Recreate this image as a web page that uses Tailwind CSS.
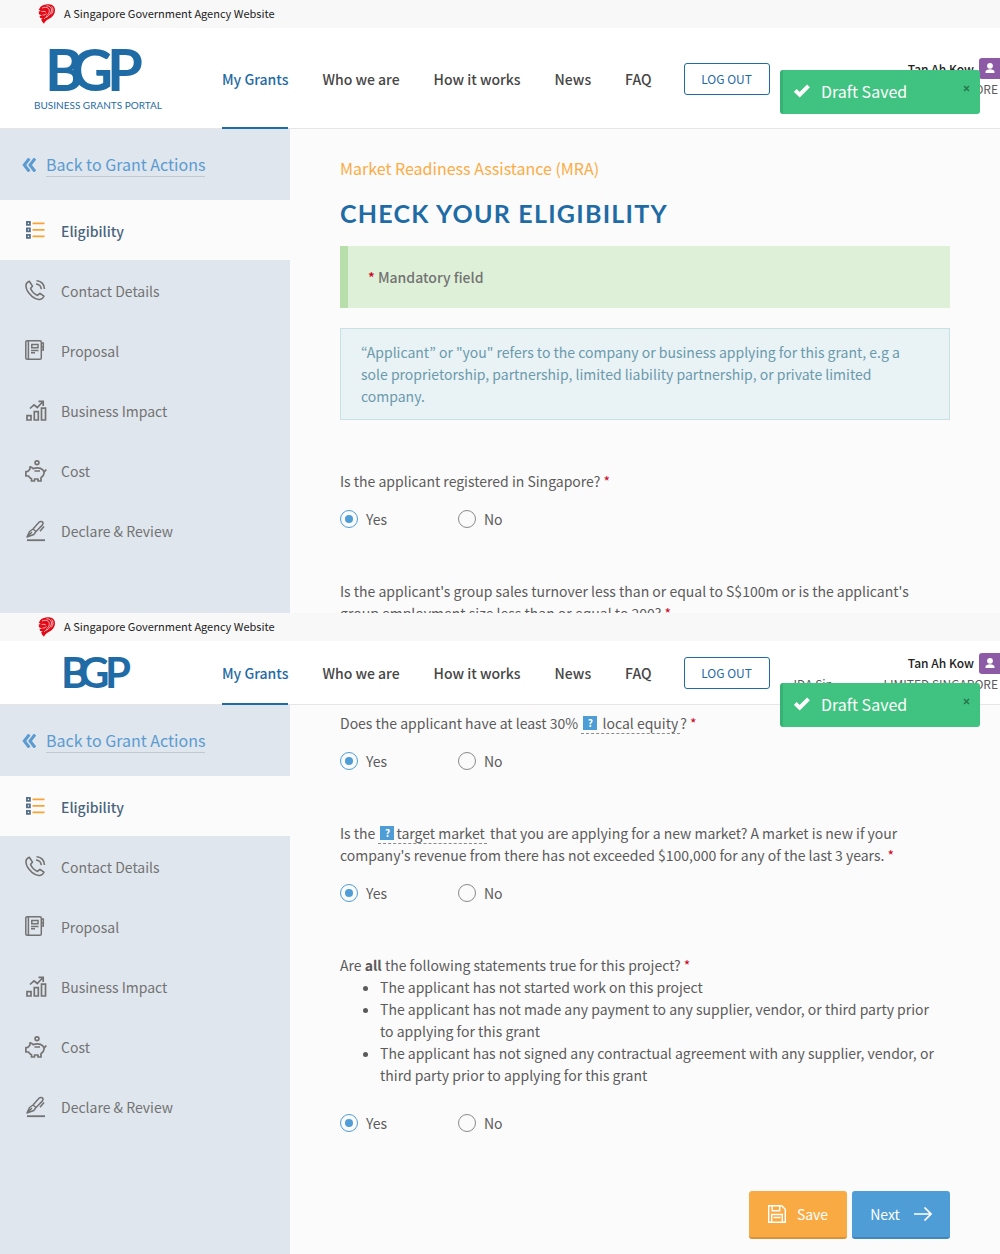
<!DOCTYPE html>
<html lang="en">
<head>
<meta charset="utf-8">
<meta name="viewport" content="width=device-width, initial-scale=1">
<title>Business Grants Portal - Check Your Eligibility</title>
<script src="https://cdn.jsdelivr.net/npm/@tailwindcss/browser@4"></script>
</head>
<body class="bg-[#fbfbfb] font-['Noto_Sans_CJK_KR','Noto_Sans',sans-serif] text-sm leading-[22px] text-[#5b5b5b]">

<svg class="hidden" aria-hidden="true">
  <symbol id="lion" viewBox="0 0 18 20">
    <path fill="#e20a17" d="M2.200 3.200C4.500.8 8 0 11 .3c3.500.3 6 2.500 6 5.700 0 3-1.200 5.200-3.200 7C11.500 15 8 15.500 6 19.800 4.700 18.500 3.500 17 3.200 15.200l1.600-.8-2.600-.5L1.500 12l2.500-.6L1 10.200.7 7.500l2-.6L.8 5.800z"/>
    <path fill="none" stroke="#f8f8f8" stroke-width=".7" d="M4 4.200C6.500 2.800 9 3 10.500 4.600c1.700 2.200.5 5.500-2 7.200M8.500 1.800c3 0 5 1.500 5 4.200 0 2.800-2 5-5 7.500M13.500 2.500c2 1.700 2 5-.3 7.800M3.500 7.700c1.600-.6 3.300-.5 4.300.3M4.500 11c1.800.2 3-.4 3.800-1.500M6 15c1-1.300 2-2 3.200-2.700"/>
  </symbol>
  <symbol id="chevrons" viewBox="0 0 14 14"><path fill="none" stroke="#5b9bd1" stroke-width="3" d="M7.300.5 2.300 7l5 6.500M13 .5 8 7l5 6.500"/></symbol>
  <symbol id="list" viewBox="0 0 22 22">
    <path fill="none" stroke="#566f86" stroke-width="1.800" d="M1.900 1.900h3v3h-3zM1.900 8.400h3v3h-3zM1.900 14.900h3v3h-3z"/>
    <path stroke="#f9a335" stroke-width="1.800" d="M7.500 3.400h12M7.500 9.900h12M7.500 16.400h12"/>
  </symbol>
  <symbol id="phone" viewBox="0 0 22 22">
    <g fill="none" stroke="#737373" stroke-width="1.600" stroke-linejoin="round">
      <path d="M4.300 1.200C2.200 2 .8 3.800 1 6.500c.3 3.200 3.200 7.300 6 9.900 2.600 2.300 6 3.500 8.600 2.800 1.600-.4 2.700-1.600 3.300-3L15 13.300l-2.600 2.100C9.600 14.200 6.700 11.100 5.600 8.500L7.500 6.100z"/>
      <path d="M11.500.8c4.600 0 8 3.500 8 8.200M11 4c3.200.2 5 2.200 5.300 5.200"/>
    </g>
  </symbol>
  <symbol id="book" viewBox="0 0 22 22">
    <g fill="none" stroke="#737373" stroke-width="1.500">
      <rect x=".8" y=".8" width="15.500" height="18.400" rx="1.300"/><path d="M3.400 1v18M6.800 4.500h6.200v3.300H6.800zM6 10.400h7.500M6 12.800h4M17 3h1.300v4H17M17 7h1.300v3H17"/>
    </g>
  </symbol>
  <symbol id="chart" viewBox="0 0 22 22">
    <g fill="none" stroke="#737373" stroke-width="1.700">
      <path d="M2 15.700h4V20H2zM9.300 11.700h4V20h-4zM16.500 8.200h4V20h-4zM5 8.500l4-3.700 3.300 2.700L17.500 2M13.500 1.300h4.700V6"/>
    </g>
  </symbol>
  <symbol id="pig" viewBox="0 0 22 22">
    <g fill="none" stroke="#737373" stroke-width="1.700" stroke-linejoin="round">
      <circle cx="12" cy="2.800" r="1.900"/>
      <path d="M5 6.800c1.500 0 2.300.8 3 1.800 3-1 7.500-1 9.800 1.200 1 .9 1.400 2 1.300 3.200-.2 2.300-1.700 3.800-3.100 4.800V21h-3v-2H9.500v2h-3v-2.300C4.700 18 4 17 3.600 16H.9v-4.500h1.900L5 9zM9.500 11h5.500M19.200 12 21.300 9.500"/>
    </g>
  </symbol>
  <symbol id="pen" viewBox="0 0 22 22">
    <g fill="none" stroke="#737373" stroke-width="1.500" stroke-linejoin="round">
      <path d="M2 17 4.500 11.500 8 9l3 2.500-2.200 3zM2 17l5-5M8 9l6-6.800c1-1 2.700-1 3.400-.3.900.9.700 2.200-.1 3.200L11 11.500M19 6.500 15 11.300"/>
      <path stroke-width="1.800" d="M2 20.200h18"/>
    </g>
  </symbol>
  <symbol id="user" viewBox="0 0 21 21"><circle cx="11" cy="7.800" r="2.900" fill="#fff"/><path fill="#fff" d="M6.500 15v-1.200c0-1.600 2-2.500 4.500-2.500s4.500.9 4.500 2.500V15z"/></symbol>
  <symbol id="check" viewBox="0 0 16 14"><path fill="none" stroke="#fff" stroke-width="4" d="m1.300 6.500 4.400 4.200 8.800-8.800"/></symbol>
</svg>

<!-- Top of the form -->
<section class="relative h-[613px] overflow-hidden">
  <div class="flex h-7 items-center gap-2 bg-[#f8f8f8] pl-[38px] text-[11px] text-[#222]">
    <svg class="h-5 w-[18px]"><use href="#lion"/></svg><span class="pb-[2px]">A Singapore Government Agency Website</span>
  </div>
  <header class="flex h-[101px] overflow-hidden bg-white shadow-[inset_0_-1px_0_#e6e6e6]">
    <a href="#" class="w-[222px] shrink-0" aria-label="Business Grants Portal">
      <svg class="h-[100px] w-[222px]" viewBox="0 0 222 100" fill="#1f6ba5" font-family="Lato, sans-serif">
        <text x="45 71 107" y="63" font-size="58" font-weight="700">BGP</text>
        <text x="34" y="81" font-size="10" font-weight="400">BUSINESS GRANTS PORTAL</text>
      </svg>
    </a>
    <nav class="flex shrink-0 gap-[34px] text-sm font-medium text-[#464646]">
      <a href="#" class="flex items-center border-b-2 border-[#1f6ba5] pt-[2px] text-[#1f6ba5]">My Grants</a>
      <a href="#" class="flex items-center">Who we are</a>
      <a href="#" class="flex items-center">How it works</a>
      <a href="#" class="flex items-center">News</a>
      <a href="#" class="flex items-center">FAQ</a>
    </nav>
    <button class="ml-8 h-8 w-[86px] shrink-0 self-center rounded-[3px] border border-[#1f6ba5] text-xs text-[#1f6ba5]">LOG OUT</button>
    <div class="min-w-0 flex-1 self-center text-xs leading-5">
      <div class="flex items-center justify-end gap-[5px]"><span class="font-medium text-[#222]">Tan Ah Kow</span><svg class="h-[21px] w-[21px] rounded-l-[3px] bg-[#8d5aa5]"><use href="#user"/></svg></div>
      <div class="flex justify-between pr-[2px] pl-6"><span>IDA Sin</span><span>LIMITED SINGAPORE</span></div>
    </div>
  </header>
  <div class="flex">
    <aside class="h-[484px] w-[290px] shrink-0 bg-[#dfe6ed]">
      <div class="flex h-[71px] items-center gap-[10px] pl-[22px] text-base text-[#5b9bd1]"><svg class="h-[14px] w-[14px]"><use href="#chevrons"/></svg><a href="#" class="border-b border-[#c4c8cc]">Back to Grant Actions</a></div>
      <nav class="text-sm text-[#737373]">
        <a href="#" class="flex h-[60px] items-center gap-[14px] bg-[#fbfbfb] pt-[2px] pl-[25px] font-medium text-[#4a647d]"><svg class="h-[22px] w-[22px]"><use href="#list"/></svg>Eligibility</a>
        <a href="#" class="flex h-[60px] items-center gap-[14px] pt-[2px] pl-[25px]"><svg class="h-[22px] w-[22px]"><use href="#phone"/></svg>Contact Details</a>
        <a href="#" class="flex h-[60px] items-center gap-[14px] pt-[2px] pl-[25px]"><svg class="h-[22px] w-[22px]"><use href="#book"/></svg>Proposal</a>
        <a href="#" class="flex h-[60px] items-center gap-[14px] pt-[2px] pl-[25px]"><svg class="h-[22px] w-[22px]"><use href="#chart"/></svg>Business Impact</a>
        <a href="#" class="flex h-[60px] items-center gap-[14px] pt-[2px] pl-[25px]"><svg class="h-[22px] w-[22px]"><use href="#pig"/></svg>Cost</a>
        <a href="#" class="flex h-[60px] items-center gap-[14px] pt-[2px] pl-[25px]"><svg class="h-[22px] w-[22px]"><use href="#pen"/></svg>Declare &amp; Review</a>
      </nav>
    </aside>
    <main class="min-w-0 flex-1 px-[50px] pt-7">
      <p class="text-base leading-[22px] text-[#fbac45]">Market Readiness Assistance (MRA)</p>
      <h1 class="mt-4 font-['Lato',sans-serif] text-[25px] leading-9 font-bold tracking-wider text-[#1f6ba5]">CHECK YOUR ELIGIBILITY</h1>
      <div class="mt-[15px] flex h-[62px] items-center border-l-8 border-[#b8dfab] bg-[#def0d8] pl-5 font-medium text-[#737373]"><span><span class="text-[#d0021b]">*</span> Mandatory field</span></div>
      <div class="mt-5 border border-[#c9e0e4] bg-[#e9f2f4] px-5 py-3 text-[#6b9aad]">“Applicant” or "you" refers to the company or business applying for this grant, e.g a sole proprietorship, partnership, limited liability partnership, or private limited company.</div>
      <fieldset class="mt-[50px]">
        <legend>Is the applicant registered in Singapore? <span class="text-[#d0021b]">*</span></legend>
        <div class="mt-4 flex">
          <label class="flex w-[118px] items-center gap-2"><input type="radio" name="q1" checked class="h-[18px] w-[18px] appearance-none rounded-full border border-[#8a8a8a] bg-clip-content p-1 checked:border-[#4f9dd6] checked:bg-[#4f9dd6]">Yes</label>
          <label class="flex items-center gap-2"><input type="radio" name="q1" class="h-[18px] w-[18px] appearance-none rounded-full border border-[#8a8a8a] bg-clip-content p-1 checked:border-[#4f9dd6] checked:bg-[#4f9dd6]">No</label>
        </div>
      </fieldset>
      <p class="mt-[50px]">Is the applicant's group sales turnover less than or equal to S$100m or is the applicant's group employment size less than or equal to 200? <span class="text-[#d0021b]">*</span></p>
    </main>
  </div>
  <div role="status" class="absolute top-[70px] right-5 flex h-11 w-[200px] items-center gap-[11px] rounded-[3px] border-l-[3px] border-[#36b374] bg-[#40c380] pb-[2px] pl-[11px] text-base text-white">
    <svg class="h-[14px] w-4"><use href="#check"/></svg>Draft Saved
    <button aria-label="Close" class="absolute top-[15px] right-[10px] text-[#26754d]"><svg class="h-[7px] w-[7px]" viewBox="0 0 7 7"><path stroke="currentColor" stroke-width="1.500" d="m1 1 5 5M6 1 1 6"/></svg></button>
  </div>
</section>

<!-- Lower part of the form -->
<section class="relative">
  <div class="flex h-7 items-center gap-2 bg-[#f8f8f8] pl-[38px] text-[11px] text-[#222]">
    <svg class="h-5 w-[18px]"><use href="#lion"/></svg><span class="pb-[2px]">A Singapore Government Agency Website</span>
  </div>
  <header class="flex h-16 overflow-hidden bg-white shadow-[inset_0_-1px_0_#e6e6e6]">
    <a href="#" class="w-[222px] shrink-0" aria-label="Business Grants Portal">
      <svg class="h-16 w-[222px]" viewBox="0 0 222 64" fill="#1f6ba5" font-family="Lato, sans-serif"><text x="61 79 105" y="47" font-size="42" font-weight="700">BGP</text></svg>
    </a>
    <nav class="flex shrink-0 gap-[34px] text-sm font-medium text-[#464646]">
      <a href="#" class="flex items-center border-b-2 border-[#1f6ba5] pt-[2px] text-[#1f6ba5]">My Grants</a>
      <a href="#" class="flex items-center">Who we are</a>
      <a href="#" class="flex items-center">How it works</a>
      <a href="#" class="flex items-center">News</a>
      <a href="#" class="flex items-center">FAQ</a>
    </nav>
    <button class="ml-8 h-8 w-[86px] shrink-0 self-center rounded-[3px] border border-[#1f6ba5] text-xs text-[#1f6ba5]">LOG OUT</button>
    <div class="min-w-0 flex-1 self-center text-xs leading-5">
      <div class="flex items-center justify-end gap-[5px]"><span class="font-medium text-[#222]">Tan Ah Kow</span><svg class="h-[21px] w-[21px] rounded-l-[3px] bg-[#8d5aa5]"><use href="#user"/></svg></div>
      <div class="flex justify-between pr-[2px] pl-6"><span>IDA Sin</span><span>LIMITED SINGAPORE</span></div>
    </div>
  </header>
  <div class="flex">
    <aside class="w-[290px] shrink-0 bg-[#dfe6ed]">
      <div class="flex h-[71px] items-center gap-[10px] pl-[22px] text-base text-[#5b9bd1]"><svg class="h-[14px] w-[14px]"><use href="#chevrons"/></svg><a href="#" class="border-b border-[#c4c8cc]">Back to Grant Actions</a></div>
      <nav class="text-sm text-[#737373]">
        <a href="#" class="flex h-[60px] items-center gap-[14px] bg-[#fbfbfb] pt-[2px] pl-[25px] font-medium text-[#4a647d]"><svg class="h-[22px] w-[22px]"><use href="#list"/></svg>Eligibility</a>
        <a href="#" class="flex h-[60px] items-center gap-[14px] pt-[2px] pl-[25px]"><svg class="h-[22px] w-[22px]"><use href="#phone"/></svg>Contact Details</a>
        <a href="#" class="flex h-[60px] items-center gap-[14px] pt-[2px] pl-[25px]"><svg class="h-[22px] w-[22px]"><use href="#book"/></svg>Proposal</a>
        <a href="#" class="flex h-[60px] items-center gap-[14px] pt-[2px] pl-[25px]"><svg class="h-[22px] w-[22px]"><use href="#chart"/></svg>Business Impact</a>
        <a href="#" class="flex h-[60px] items-center gap-[14px] pt-[2px] pl-[25px]"><svg class="h-[22px] w-[22px]"><use href="#pig"/></svg>Cost</a>
        <a href="#" class="flex h-[60px] items-center gap-[14px] pt-[2px] pl-[25px]"><svg class="h-[22px] w-[22px]"><use href="#pen"/></svg>Declare &amp; Review</a>
      </nav>
    </aside>
    <main class="min-w-0 flex-1 px-[50px] pt-[7px] pb-[15px]">
      <fieldset>
        <legend>Does the applicant have at least 30% <a href="#" class="border-b border-dashed border-[#8a8a8a] px-[2px]"><span class="mr-[2px] inline-block h-[14px] w-[14px] bg-[#4f9dd6] text-center align-[2px] text-[10px] leading-[14px] font-bold text-white">?</span> local equity</a>? <span class="text-[#d0021b]">*</span></legend>
        <div class="mt-4 flex">
          <label class="flex w-[118px] items-center gap-2"><input type="radio" name="q3" checked class="h-[18px] w-[18px] appearance-none rounded-full border border-[#8a8a8a] bg-clip-content p-1 checked:border-[#4f9dd6] checked:bg-[#4f9dd6]">Yes</label>
          <label class="flex items-center gap-2"><input type="radio" name="q3" class="h-[18px] w-[18px] appearance-none rounded-full border border-[#8a8a8a] bg-clip-content p-1 checked:border-[#4f9dd6] checked:bg-[#4f9dd6]">No</label>
        </div>
      </fieldset>
      <fieldset class="mt-[50px]">
        <legend>Is the <a href="#" class="border-b border-dashed border-[#8a8a8a] px-[2px]"><span class="mr-[2px] inline-block h-[14px] w-[14px] bg-[#4f9dd6] text-center align-[2px] text-[10px] leading-[14px] font-bold text-white">?</span>target market</a> that you are applying for a new market? A market is new if your company's revenue from there has not exceeded $100,000 for any of the last 3 years. <span class="text-[#d0021b]">*</span></legend>
        <div class="mt-4 flex">
          <label class="flex w-[118px] items-center gap-2"><input type="radio" name="q4" checked class="h-[18px] w-[18px] appearance-none rounded-full border border-[#8a8a8a] bg-clip-content p-1 checked:border-[#4f9dd6] checked:bg-[#4f9dd6]">Yes</label>
          <label class="flex items-center gap-2"><input type="radio" name="q4" class="h-[18px] w-[18px] appearance-none rounded-full border border-[#8a8a8a] bg-clip-content p-1 checked:border-[#4f9dd6] checked:bg-[#4f9dd6]">No</label>
        </div>
      </fieldset>
      <fieldset class="mt-[50px]">
        <legend>Are <b>all</b> the following statements true for this project? <span class="text-[#d0021b]">*</span></legend>
        <ul class="list-disc pr-2 pl-10">
          <li>The applicant has not started work on this project</li>
          <li>The applicant has not made any payment to any supplier, vendor, or third party prior to applying for this grant</li>
          <li>The applicant has not signed any contractual agreement with any supplier, vendor, or third party prior to applying for this grant</li>
        </ul>
        <div class="mt-[26px] flex">
          <label class="flex w-[118px] items-center gap-2"><input type="radio" name="q5" checked class="h-[18px] w-[18px] appearance-none rounded-full border border-[#8a8a8a] bg-clip-content p-1 checked:border-[#4f9dd6] checked:bg-[#4f9dd6]">Yes</label>
          <label class="flex items-center gap-2"><input type="radio" name="q5" class="h-[18px] w-[18px] appearance-none rounded-full border border-[#8a8a8a] bg-clip-content p-1 checked:border-[#4f9dd6] checked:bg-[#4f9dd6]">No</label>
        </div>
      </fieldset>
      <div class="mt-[57px] flex justify-end gap-[5px] text-sm text-white">
        <button class="flex h-12 w-[98px] items-center justify-center gap-[11px] rounded-[3px] border-b-2 border-[#d9923a] bg-[#faaa43]"><svg class="h-[18px] w-[18px]" viewBox="0 0 18 18" fill="none" stroke="#fff" stroke-width="1.400"><path d="M.7.700h13l3.600 3.600v13H.7zM4.200.700v5h7.500v-5M3.700 17.300V9.500h10.600v7.800M5.500 12.500h7"/></svg>Save</button>
        <button class="flex h-12 w-[98px] items-center justify-center gap-[14px] rounded-[3px] border-b-2 border-[#4287b9] bg-[#4f9dd6]">Next<svg class="h-[14px] w-[18px]" viewBox="0 0 18 14" fill="none" stroke="#fff" stroke-width="1.700"><path d="M0 7h17M10.500.5 17 7l-6.500 6.500"/></svg></button>
      </div>
    </main>
  </div>
  <div role="status" class="absolute top-[70px] right-5 flex h-11 w-[200px] items-center gap-[11px] rounded-[3px] border-l-[3px] border-[#36b374] bg-[#40c380] pb-[2px] pl-[11px] text-base text-white">
    <svg class="h-[14px] w-4"><use href="#check"/></svg>Draft Saved
    <button aria-label="Close" class="absolute top-[15px] right-[10px] text-[#26754d]"><svg class="h-[7px] w-[7px]" viewBox="0 0 7 7"><path stroke="currentColor" stroke-width="1.500" d="m1 1 5 5M6 1 1 6"/></svg></button>
  </div>
</section>
</body>
</html>
